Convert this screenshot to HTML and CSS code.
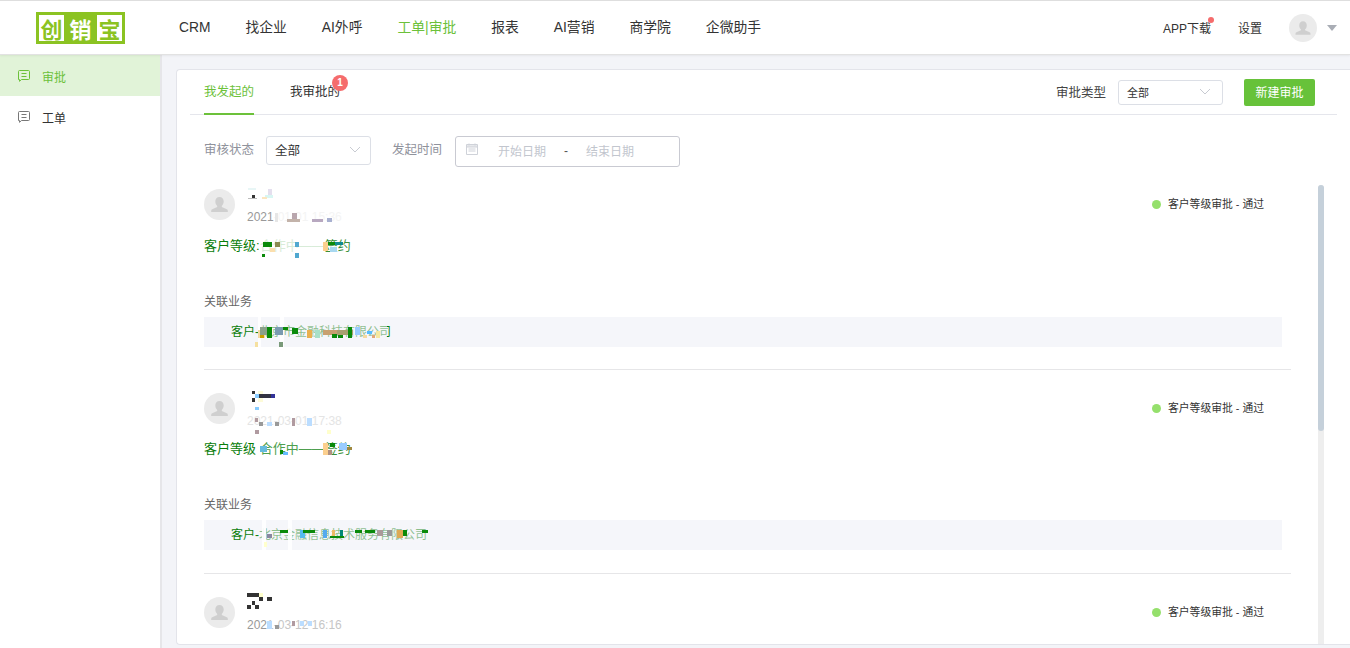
FILE: index.html
```html
<!DOCTYPE html>
<html lang="zh-CN">
<head>
<meta charset="utf-8">
<title>工单审批</title>
<link rel="stylesheet" href="styles.css">
</head>
<body>
<svg class="defs" width="0" height="0" aria-hidden="true">
  <symbol id="person" viewBox="0 0 31 31">
    <circle cx="15.5" cy="15.5" r="15.5" fill="#ebebeb"/>
    <path d="M15.5 8c2.6 0 4.2 2 4.2 4.6 0 1.8-.8 3.4-1.9 4.3v1.2l5 2.2c.7.3 1 .8 1 1.5v1.2H7.2v-1.2c0-.7.3-1.2 1-1.5l5-2.2v-1.2c-1.1-.9-1.9-2.5-1.9-4.3C11.300 10 12.900 8 15.500 8z" fill="#cfcfcf"/>
  </symbol>
  <symbol id="msg" viewBox="0 0 12 12">
    <path d="M.5 1.500a1 1 0 0 1 1-1h9a1 1 0 0 1 1 1v7a1 1 0 0 1-1 1H3.500L1.500 11.300V9.500h-1z" fill="none" stroke="currentColor"/>
    <path d="M3.500 3.500h5M3.500 6.500h5" fill="none" stroke="currentColor"/>
  </symbol>
  <symbol id="chev" viewBox="0 0 12 7">
    <path d="M1 1l5 5 5-5" fill="none" stroke="#c8cbd2" stroke-width="1"/>
  </symbol>
</svg>

<header class="topbar">
  <div class="logo">
    <span class="logo-char logo-light">创</span>
    <span class="logo-char logo-dark">销</span>
    <span class="logo-char logo-light">宝</span>
  </div>
  <nav class="nav">
    <a class="nav-link">CRM</a>
    <a class="nav-link">找企业</a>
    <a class="nav-link">AI外呼</a>
    <a class="nav-link nav-active">工单|审批</a>
    <a class="nav-link">报表</a>
    <a class="nav-link">AI营销</a>
    <a class="nav-link">商学院</a>
    <a class="nav-link">企微助手</a>
  </nav>
  <div class="user">
    <span class="user-link app-link">APP下载<i class="red-dot"></i></span>
    <span class="user-link">设置</span>
    <svg class="user-avatar"><use href="#person"/></svg>
    <i class="caret"></i>
  </div>
</header>

<div class="layout">
  <aside class="sidebar">
    <a class="side-item side-active"><svg class="side-icon"><use href="#msg"/></svg>审批</a>
    <a class="side-item"><svg class="side-icon"><use href="#msg"/></svg>工单</a>
  </aside>

  <main class="main">
    <section class="card">
      <div class="tabs">
        <a class="tab tab-active">我发起的</a>
        <a class="tab">我审批的<b class="badge">1</b></a>
        <div class="tab-tools">
          <span class="tool-label">审批类型</span>
          <div class="select select-small"><span>全部</span><svg class="chev"><use href="#chev"/></svg></div>
          <button class="primary" type="button">新建审批</button>
        </div>
      </div>

      <div class="filters">
        <span class="filter-label">审核状态</span>
        <div class="select select-status"><span>全部</span><svg class="chev"><use href="#chev"/></svg></div>
        <span class="filter-label filter-time">发起时间</span>
        <div class="date-range">
          <svg class="cal" viewBox="0 0 12 12"><path d="M.5 1.500h11v10H.5zM.5 3h11M.5 4h11M3 .5v2M9 .5v2M2.500 6h7M2.500 8h7" fill="none" stroke="#cfd2d9"/></svg>
          <span class="date-ph date-start">开始日期</span>
          <span class="date-sep">-</span>
          <span class="date-ph date-end">结束日期</span>
        </div>
      </div>

      <div class="body">
        <div class="list">

          <article class="item">
            <div class="head">
              <svg class="avatar"><use href="#person"/></svg>
              <div class="meta">
                <div class="name"></div>
                <div class="time">2021<span class="faint">-01-01 15:36</span></div>
              </div>
              <div class="status"><i class="status-dot"></i>客户等级审批 - 通过</div>
            </div>
            <div class="level">客户等级:<span class="fade">合作中——</span><span class="fade2">签约</span></div>
            <div class="rel-label">关联业务</div>
            <div class="rel-box">客户-北京市金融科技有限公司</div>
            <svg class="mosaic" width="300" height="204" viewBox="204 185 300 204">
              <rect x="248" y="188" width="8" height="2" fill="#e8f6f6"/><rect x="252" y="195" width="3" height="3" fill="#333"/><rect x="248" y="198" width="9" height="1" fill="#bbb"/><rect x="265" y="195" width="8" height="3" fill="#d8f6f3"/><rect x="268" y="189" width="4" height="6" fill="#e4dfee"/><rect x="262" y="197" width="5" height="2" fill="#fbe6c0"/>
              <rect x="275" y="213" width="3" height="9" fill="#e6e6e6"/><rect x="292" y="213" width="5" height="9" fill="#b9a6ad"/><rect x="287" y="219" width="13" height="3" fill="#c3b3aa"/><rect x="312" y="219" width="11" height="3" fill="#b8a8c0"/><rect x="327" y="218" width="5" height="4" fill="#a8b0d0"/>
              <rect x="263" y="242" width="9" height="5" fill="#0a8a0a"/><rect x="262" y="254" width="3" height="3" fill="#0a8a0a"/><rect x="270" y="248" width="5" height="4" fill="#fbdfae"/><rect x="275" y="242" width="5" height="5" fill="#8a8a50"/><rect x="295" y="242" width="4" height="5" fill="#50a8d0"/><rect x="295" y="253" width="4" height="5" fill="#50a8d0"/><rect x="323" y="242" width="5" height="9" fill="#fbcf8e"/><rect x="328" y="242" width="7" height="3" fill="#0a8a0a"/><rect x="335" y="242" width="8" height="3" fill="#108a90"/><rect x="330" y="247" width="7" height="5" fill="#a8d8f0"/>
              <rect x="259" y="325" width="128" height="14" fill="#f5f6fa" fill-opacity=".55"/>
              <rect x="258" y="315" width="3" height="54" fill="#fff" fill-opacity=".9"/><rect x="280" y="315" width="4" height="54" fill="#fff" fill-opacity=".9"/>
              <rect x="258" y="330" width="7" height="8" fill="#f5d9a0"/><rect x="260" y="327" width="12" height="8" fill="#8aa08a"/><rect x="267" y="327" width="5" height="11" fill="#0a8a0a"/><rect x="260" y="335" width="4" height="3" fill="#c8a000"/><rect x="255" y="342" width="3" height="5" fill="#f5e0a0"/><rect x="279" y="342" width="4" height="5" fill="#7a9a7a"/><rect x="275" y="327" width="8" height="8" fill="#7a9ab0"/><rect x="283" y="327" width="5" height="3" fill="#0a8a0a"/><rect x="292" y="328" width="6" height="6" fill="#0a8a0a"/><rect x="307" y="330" width="5" height="8" fill="#eab050"/><rect x="315" y="330" width="5" height="8" fill="#a8e0c8"/><rect x="323" y="330" width="14" height="5" fill="#c8a070"/><rect x="332" y="334" width="5" height="4" fill="#0a8a0a"/><rect x="338" y="335" width="5" height="3" fill="#0a8a0a"/><rect x="337" y="330" width="16" height="5" fill="#a8a070"/><rect x="348" y="327" width="4" height="11" fill="#0a8a0a"/><rect x="355" y="327" width="5" height="8" fill="#99ccff"/><rect x="363" y="335" width="4" height="3" fill="#f5d9a0"/><rect x="367" y="331" width="5" height="3" fill="#55bbff"/><rect x="372" y="335" width="3" height="3" fill="#e0a878"/><rect x="376" y="331" width="4" height="7" fill="#f5e8a0"/>
            </svg>
          </article>

          <article class="item item-tall">
            <div class="head">
              <svg class="avatar"><use href="#person"/></svg>
              <div class="meta">
                <div class="name"></div>
                <div class="time"><span class="faint2">2021-03-01 17:38</span></div>
              </div>
              <div class="status"><i class="status-dot"></i>客户等级审批 - 通过</div>
            </div>
            <div class="level level-up">客户等级<span class="fade-mid"> 合作中——</span><span class="fade2">签约</span></div>
            <div class="rel-label">关联业务</div>
            <div class="rel-box">客户-北京金融信息技术服务有限公司</div>
            <svg class="mosaic" width="300" height="223" viewBox="204 370 300 223">
              <rect x="252" y="391" width="3" height="3" fill="#333"/><rect x="252" y="398" width="3" height="4" fill="#333"/><rect x="258" y="391" width="5" height="11" fill="#fdfbd8"/><rect x="255" y="394" width="4" height="4" fill="#88ccff"/><rect x="259" y="394" width="12" height="4" fill="#333340"/><rect x="271" y="394" width="4" height="4" fill="#333399"/><rect x="255" y="407" width="4" height="3" fill="#88ccff"/>
              <rect x="255" y="418" width="3" height="4" fill="#b09aa0"/><rect x="259" y="422" width="4" height="4" fill="#999"/><rect x="255" y="430" width="4" height="4" fill="#b09aa0"/><rect x="275" y="422" width="4" height="4" fill="#999"/><rect x="292" y="418" width="3" height="8" fill="#b09aa0"/><rect x="267" y="422" width="5" height="4" fill="#bbddff"/><rect x="307" y="418" width="5" height="8" fill="#bbddff"/><rect x="327" y="430" width="4" height="4" fill="#ffffcc"/>
              <rect x="260" y="446" width="7" height="6" fill="#66bbdd"/><rect x="280" y="450" width="3" height="4" fill="#0a8a0a"/><rect x="283" y="452" width="5" height="3" fill="#66bbff"/><rect x="323" y="443" width="5" height="12" fill="#fbcf8e"/><rect x="330" y="443" width="5" height="4" fill="#0a8a0a"/><rect x="328" y="450" width="4" height="5" fill="#b09080"/><rect x="339" y="443" width="8" height="7" fill="#99ccff"/><rect x="347" y="447" width="5" height="3" fill="#a08840"/>
              <rect x="259" y="528" width="170" height="14" fill="#f5f6fa" fill-opacity=".55"/>
              <rect x="262" y="519" width="4" height="54" fill="#fff" fill-opacity=".9"/><rect x="288" y="519" width="4" height="54" fill="#fff" fill-opacity=".9"/>
              <rect x="267" y="534" width="5" height="4" fill="#8888a0"/><rect x="264" y="542" width="3" height="5" fill="#ffffcc"/><rect x="280" y="530" width="8" height="3" fill="#0a8a0a"/><rect x="300" y="530" width="5" height="8" fill="#55bbee"/><rect x="303" y="530" width="12" height="3" fill="#0a8a0a"/><rect x="323" y="530" width="4" height="8" fill="#55aaee"/><rect x="332" y="530" width="3" height="8" fill="#eebb66"/><rect x="340" y="530" width="3" height="8" fill="#008877"/><rect x="330" y="536" width="14" height="2" fill="#0a8a0a"/><rect x="355" y="530" width="7" height="3" fill="#0a8a0a"/><rect x="365" y="530" width="10" height="3" fill="#0a8a0a"/><rect x="377" y="530" width="6" height="6" fill="#aa9999"/><rect x="387" y="530" width="5" height="6" fill="#999"/><rect x="397" y="530" width="6" height="8" fill="#ddaa55"/><rect x="403" y="530" width="4" height="6" fill="#0a8a0a"/><rect x="422" y="530" width="6" height="3" fill="#0a8a0a"/>
            </svg>
          </article>

          <article class="item">
            <div class="head">
              <svg class="avatar"><use href="#person"/></svg>
              <div class="meta">
                <div class="name"></div>
                <div class="time">202<span class="faint3">1-03-12 16:16</span></div>
              </div>
              <div class="status"><i class="status-dot"></i>客户等级审批 - 通过</div>
            </div>
            <svg class="mosaic" width="300" height="80" viewBox="204 575 300 80">
              <rect x="247" y="594" width="12" height="4" fill="#333"/><rect x="259" y="594" width="4" height="4" fill="#ffffcc"/><rect x="259" y="598" width="4" height="4" fill="#333"/><rect x="267" y="598" width="5" height="4" fill="#333"/><rect x="252" y="602" width="3" height="4" fill="#333"/><rect x="247" y="606" width="4" height="4" fill="#333"/><rect x="255" y="606" width="4" height="4" fill="#333"/>
              <rect x="267" y="622" width="5" height="8" fill="#bbddff"/><rect x="275" y="626" width="4" height="4" fill="#999"/><rect x="292" y="622" width="3" height="5" fill="#b09aa0"/><rect x="300" y="622" width="4" height="5" fill="#bbddff"/><rect x="308" y="622" width="4" height="5" fill="#bbddff"/>
            </svg>
          </article>

        </div>
        <div class="track"><div class="thumb"></div></div>
      </div>
    </section>
  </main>
</div>
</body>
</html>
```

FILE: styles.css
```css
* { box-sizing: border-box; }
html, body { margin: 0; padding: 0; }
body {
  width: 1350px;
  height: 648px;
  overflow: hidden;
  background: #f3f4f8;
  color: #333;
  font-family: "Liberation Sans", "Noto Sans CJK SC", sans-serif;
  font-size: 12px;
  display: flex;
  flex-direction: column;
}
.defs { position: absolute; }

/* top bar */
.topbar {
  flex: none;
  height: 55px;
  display: flex;
  align-items: center;
  padding: 0 13px 0 36px;
  background: #fff;
  border-top: 1px solid #dedede;
  border-bottom: 1px solid #e2e2e2;
  box-shadow: 0 1px 2px rgba(0, 0, 0, .06);
  position: relative;
  z-index: 2;
}
.logo {
  width: 89px;
  height: 32px;
  background: #8bc322;
  display: flex;
  align-items: center;
  padding: 0 3px;
  justify-content: space-between;
}
.logo-char {
  width: 25px;
  height: 26px;
  font-size: 22px;
  line-height: 26px;
  font-weight: 700;
  text-align: center;
  font-family: "Noto Sans CJK SC", sans-serif;
}
.logo-light { background: #fff; color: #8bc322; }
.logo-dark { color: #fff; }

.nav { display: flex; gap: 35px; margin-left: 54px; }
.nav-link { font-size: 13.800px; line-height: 20px; color: #333; white-space: nowrap; }
.nav-active { color: #6cc13a; }

.user { margin-left: auto; display: flex; align-items: center; }
.user-link { font-size: 12px; color: #333; margin-right: 27px; }
.app-link { position: relative; }
.red-dot {
  position: absolute;
  right: -3px;
  top: -2px;
  width: 6px;
  height: 6px;
  border-radius: 50%;
  background: #f56c6c;
}
.user-avatar { width: 28px; height: 28px; }
.caret {
  margin-left: 10px;
  width: 0;
  height: 0;
  border-left: 5px solid transparent;
  border-right: 5px solid transparent;
  border-top: 6px solid #a9adb5;
}

/* body layout */
.layout { flex: 1; min-height: 0; display: flex; }
.sidebar {
  flex: none;
  width: 162px;
  background: #fff;
  border-right: 2px solid #e6e6e9;
}
.side-item {
  height: 40px;
  display: flex;
  align-items: center;
  padding-left: 18px;
  color: #333;
  font-size: 12px;
  margin-bottom: 1px;
}
.side-active { height: 41px; padding-top: 1px; background: #e1f3d8; color: #6cc13a; }
.side-icon { width: 12px; height: 12px; margin-right: 12px; color: #777; }
.side-active .side-icon { color: #6cc13a; }

.main { flex: 1; min-width: 0; padding: 14px 0 3px 14px; }
.card {
  height: 100%;
  display: flex;
  flex-direction: column;
  background: #fff;
  border: 1px solid #e3e4ea;
  border-right: 0;
  border-radius: 4px 0 0 4px;
}

/* tabs */
.tabs {
  flex: none;
  height: 45px;
  margin: 0 13px;
  padding: 0 22px 0 14px;
  display: flex;
  border-bottom: 1px solid #e5e6ec;
}
.tab {
  position: relative;
  height: 45px;
  margin-right: 36px;
  font-size: 12.500px;
  line-height: 44px;
  color: #333;
  white-space: nowrap;
}
.tab-active { color: #6cc13a; border-bottom: 2px solid #6cc13a; }
.badge {
  position: absolute;
  left: 42px;
  top: 5px;
  width: 16px;
  height: 16px;
  border-radius: 50%;
  background: #f56c6c;
  color: #fff;
  font-size: 10px;
  line-height: 16px;
  font-weight: 700;
  text-align: center;
}
.tab-tools { margin-left: auto; display: flex; align-items: flex-start; }
.tool-label { font-size: 12.500px; line-height: 46px; color: #444; margin-right: 12px; }
.select {
  display: flex;
  align-items: center;
  justify-content: space-between;
  background: #fff;
  border: 1px solid #dcdfe6;
  border-radius: 3px;
  color: #333;
  padding-bottom: 2px;
}
.select-small { width: 105px; height: 25px; margin-top: 10px; padding-left: 8px; padding-right: 11px; font-size: 11px; }
.select-status { width: 105px; height: 29px; padding-left: 8px; padding-right: 9px; font-size: 12.500px; }
.chev { width: 12px; height: 7px; }
.primary {
  width: 71px;
  height: 27px;
  margin: 9px 0 0 21px;
  padding: 0 0 2px;
  border: 0;
  border-radius: 2px;
  background: #67c23a;
  color: #fff;
  font: inherit;
  font-size: 12px;
}

/* filters */
.filters {
  flex: none;
  display: flex;
  align-items: flex-start;
  height: 31px;
  margin: 21px 0 18px;
  padding-left: 27px;
}
.filter-label { font-size: 12.500px; line-height: 29px; color: #8f929c; margin-right: 12px; }
.filter-time { margin-left: 21px; margin-right: 13px; }
.date-range {
  width: 225px;
  height: 31px;
  display: flex;
  align-items: center;
  padding-left: 10px;
  padding-bottom: 2px;
  border: 1px solid #c9cad2;
  border-radius: 3px;
}
.cal { width: 12px; height: 12px; margin-right: 20px; margin-top: -3px; }
.date-ph { font-size: 12px; color: #c2c6ce; }
.date-sep { margin: 0 18px; color: #555; }

/* list */
.body { flex: 1; min-height: 0; display: flex; overflow: hidden; }
.list { flex: none; width: 1087px; margin-left: 27px; }
.item { position: relative; padding-top: 19px; }
.item:first-child { padding-top: 0; }
.head { height: 40px; display: flex; align-items: flex-start; }
.avatar { flex: none; width: 31px; height: 31px; margin-top: 4px; }
.meta { margin-left: 12px; }
.name { height: 16px; }
.time { margin-top: 8px; line-height: 16px; font-size: 12px; color: #999; white-space: nowrap; }
.faint { color: #f4f4f4; }
.faint2 { color: #e4e4e4; }
.faint3 { color: #c6c6c6; }
.status {
  margin-left: auto;
  margin-top: 11px;
  margin-right: 27px;
  display: flex;
  align-items: center;
  font-size: 10.800px;
  line-height: 16px;
  color: #333;
  white-space: nowrap;
}
.status-dot {
  width: 9px;
  height: 9px;
  margin-right: 7px;
  border-radius: 50%;
  background: #95e06c;
}
.level { margin-top: 11px; font-size: 13px; line-height: 20px; color: #0a7d0a; }
.level-up { margin-top: 10px; margin-bottom: 1px; }
.fade { color: #d8ecd8; }
.fade-mid { color: #4e9f4e; }
.fade2 { color: #3a8f3a; }
.rel-label { margin-top: 37px; font-size: 12px; line-height: 18px; color: #666; }
.rel-box {
  width: 1078px;
  height: 30px;
  margin-top: 6px;
  padding-left: 27px;
  background: #f5f6fa;
  font-size: 12px;
  line-height: 30px;
  color: #0a7d0a;
}
.item:not(:last-child) { border-bottom: 1px solid #e6e6e8; padding-bottom: 22px; }
.item.item-tall { padding-bottom: 23px; }
.mosaic { position: absolute; left: 0; top: 0; pointer-events: none; }
.track { flex: none; width: 6px; margin-left: 27px; background: #eeeeee; border-radius: 3px 3px 0 0; }
.thumb { height: 246px; background: #c5d0da; border-radius: 3px; }
```
